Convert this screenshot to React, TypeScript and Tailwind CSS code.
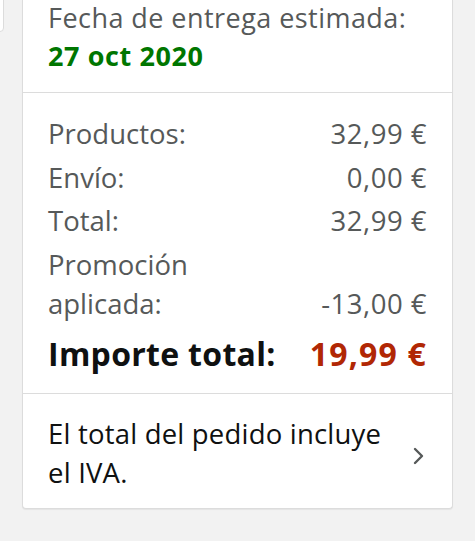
import React from 'react'

const rows = [
  { label: 'Productos:', value: '32,99 €' },
  { label: 'Envío:', value: '0,00 €' },
  { label: 'Total:', value: '32,99 €' },
]

export default function App() {
  return (
    <div className="relative min-h-[541px] w-[475px] overflow-hidden bg-[#f2f2f2] font-['Open_Sans',sans-serif]">
      {/* edge of the previous card, mostly off screen */}
      <div className="absolute -left-[10px] -top-[10px] h-[42px] w-[14px] rounded-[4px] border border-[#dcdcdc] bg-white" />

      <div className="mx-[22px] rounded-b-[4px] border border-t-0 border-[#dcdcdc] bg-white shadow-[0_1px_1px_rgba(0,0,0,0.06)]">
        {/* delivery date */}
        <div className="px-[25px] pb-[16px]">
          <p className="text-[27px] leading-[36px] tracking-[0.45px] text-[#565959]">Fecha de entrega estimada:</p>
          <p className="text-[27px] leading-[40px] font-bold tracking-[0.6px] text-[#007600]">27 oct 2020</p>
        </div>

        {/* summary */}
        <div className="border-t border-[#dcdcdc] px-[25px] pt-[21px] pb-[17px]">
          <div className="flex flex-col gap-[4.5px]">
            {rows.map(r => (
              <div key={r.label} className="flex justify-between text-[27.5px] leading-[39px] text-[#565959]">
                <span>{r.label}</span>
                <span className="tracking-[0.5px]">{r.value}</span>
              </div>
            ))}
            <div className="flex items-end justify-between text-[27.5px] leading-[39px] text-[#565959]">
              <span className="w-[160px]">Promoción aplicada:</span>
              <span className="tracking-[0.5px]">-13,00 €</span>
            </div>
          </div>
          <div className="mt-[9px] flex justify-between text-[32px] leading-[44px] font-bold">
            <span className="tracking-[0.3px] text-[#0f1111]">Importe total:</span>
            <span className="tracking-[1.2px] text-[#b12704]">19,99 €</span>
          </div>
        </div>

        {/* VAT note */}
        <div className="flex items-center justify-between border-t border-[#dcdcdc] pl-[25px] pr-[26px] pt-[20px] pb-[16px]">
          <p className="w-[345px] text-[27.5px] leading-[39px] tracking-[0.2px] text-[#0f1111]">El total del pedido incluye el IVA.</p>
          <svg width="14" height="20" viewBox="0 0 14 20" fill="none" className="mt-[6px]">
            <path d="M3 3l7 7-7 7" stroke="#565959" strokeWidth="2.4" strokeLinecap="round" strokeLinejoin="round" />
          </svg>
        </div>
      </div>
    </div>
  )
}
